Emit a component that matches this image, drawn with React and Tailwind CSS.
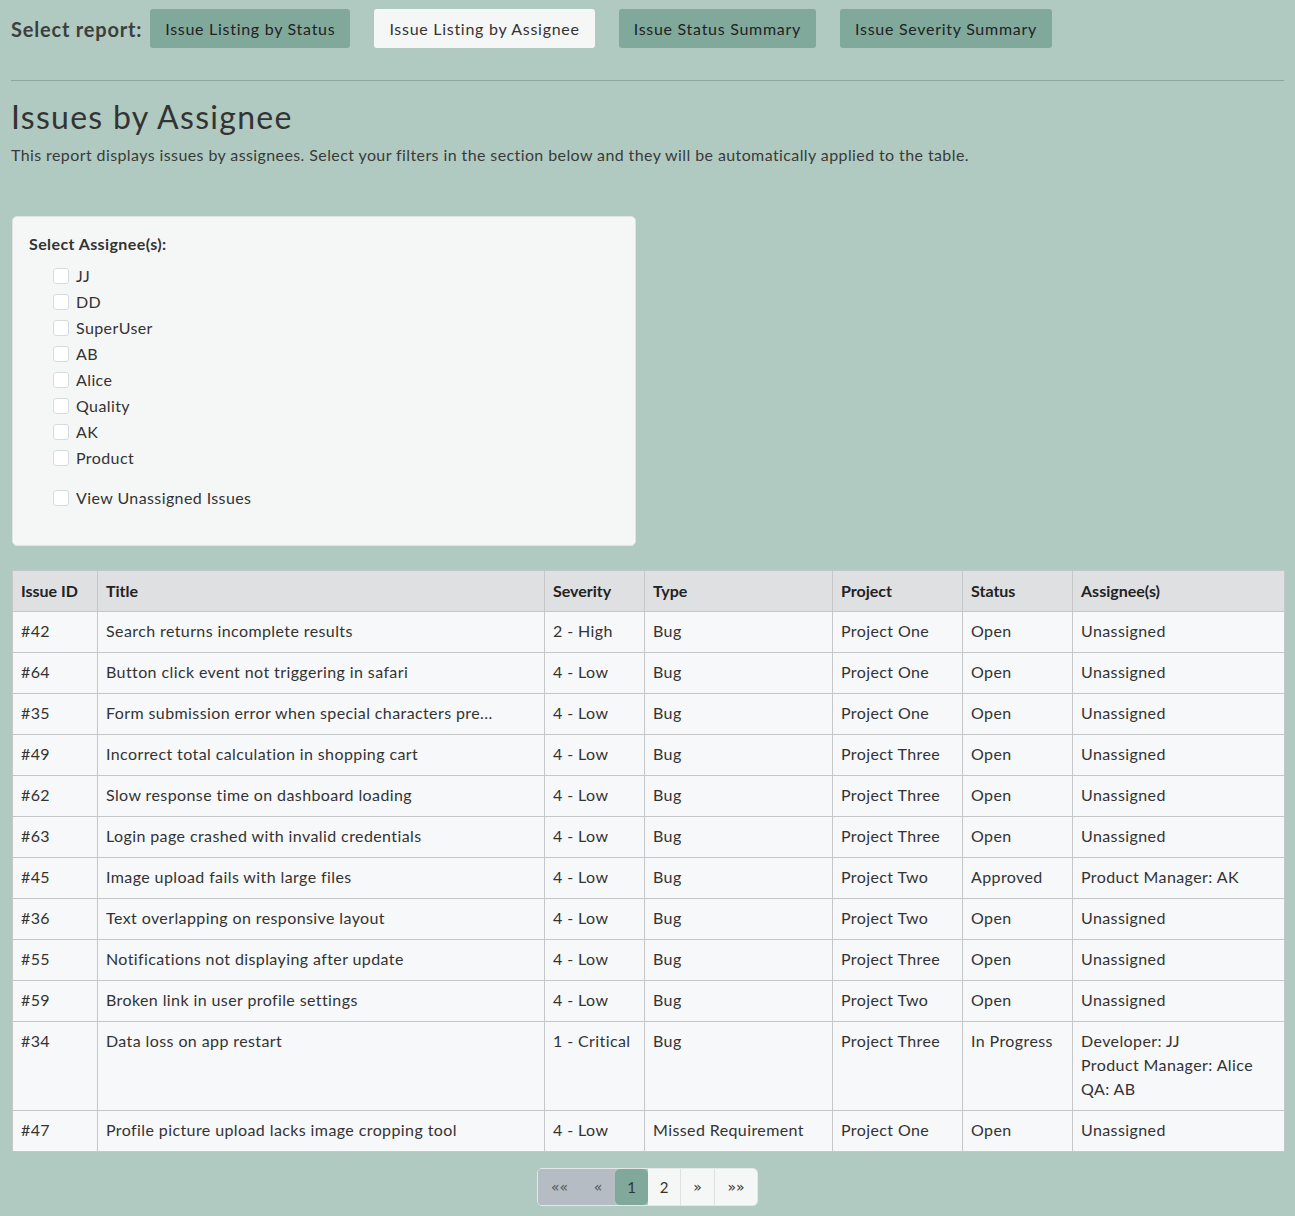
import React from 'react';

const reports = [
    { label: 'Issue Listing by Status', active: false },
    { label: 'Issue Listing by Assignee', active: true },
    { label: 'Issue Status Summary', active: false },
    { label: 'Issue Severity Summary', active: false },
];

const assignees = ['JJ', 'DD', 'SuperUser', 'AB', 'Alice', 'Quality', 'AK', 'Product'];

const issues = [
    ['#42', 'Search returns incomplete results', '2 - High', 'Bug', 'Project One', 'Open', ['Unassigned']],
    ['#64', 'Button click event not triggering in safari', '4 - Low', 'Bug', 'Project One', 'Open', ['Unassigned']],
    ['#35', 'Form submission error when special characters pre...', '4 - Low', 'Bug', 'Project One', 'Open', ['Unassigned']],
    ['#49', 'Incorrect total calculation in shopping cart', '4 - Low', 'Bug', 'Project Three', 'Open', ['Unassigned']],
    ['#62', 'Slow response time on dashboard loading', '4 - Low', 'Bug', 'Project Three', 'Open', ['Unassigned']],
    ['#63', 'Login page crashed with invalid credentials', '4 - Low', 'Bug', 'Project Three', 'Open', ['Unassigned']],
    ['#45', 'Image upload fails with large files', '4 - Low', 'Bug', 'Project Two', 'Approved', ['Product Manager: AK']],
    ['#36', 'Text overlapping on responsive layout', '4 - Low', 'Bug', 'Project Two', 'Open', ['Unassigned']],
    ['#55', 'Notifications not displaying after update', '4 - Low', 'Bug', 'Project Three', 'Open', ['Unassigned']],
    ['#59', 'Broken link in user profile settings', '4 - Low', 'Bug', 'Project Two', 'Open', ['Unassigned']],
    ['#34', 'Data loss on app restart', '1 - Critical', 'Bug', 'Project Three', 'In Progress', ['Developer: JJ', 'Product Manager: Alice', 'QA: AB']],
    ['#47', 'Profile picture upload lacks image cropping tool', '4 - Low', 'Missed Requirement', 'Project One', 'Open', ['Unassigned']],
];

const columns = [
    { label: 'Issue ID', w: 'w-[85px]' },
    { label: 'Title', w: 'w-[447px]' },
    { label: 'Severity', w: 'w-[100px]' },
    { label: 'Type', w: 'w-[188px]' },
    { label: 'Project', w: 'w-[130px]' },
    { label: 'Status', w: 'w-[110px]' },
    { label: 'Assignee(s)', w: 'w-[212px]' },
];

const Checkbox = ({ label, className = '' }) => (
    <label className={`flex items-center h-[26px] pl-[24px] ${className}`}>
        <span className="w-[16px] h-[16px] rounded-[3px] border border-[#d6dbe0] bg-white mr-[7px]" />
        <span>{label}</span>
    </label>
);

const App = () => {
    return (
        <div
            className="min-h-screen bg-[#b0cac1] px-[11px] pt-[9px] pb-[10px] text-[16px] tracking-[0.025em] text-[#333]"
            style={{ fontFamily: 'Lato, "Open Sans", sans-serif' }}
        >
            <div className="flex items-center">
                <span className="text-[20px] font-bold tracking-[0.04em] text-[#3b3f3d] mr-[8px]">Select report:</span>
                <div className="flex gap-[24px]">
                    {reports.map((r) => (
                        <button
                            key={r.label}
                            className={`h-[39px] px-[15px] rounded-[3px] text-[16px] tracking-[0.045em] ${
                                r.active ? 'bg-[#f5f7f6] text-[#333]' : 'bg-[#80a99c] text-[#222]'
                            }`}
                        >
                            {r.label}
                        </button>
                    ))}
                </div>
            </div>

            <hr className="mt-[32px] border-0 border-t border-[#8ea79e]" />

            <h1 className="mt-[16px] text-[32px] leading-[40px] tracking-[0.04em] text-[#333]">Issues by Assignee</h1>
            <p className="mt-[6px] leading-[24px] text-[#3a3a3a]">
                This report displays issues by assignees. Select your filters in the section below and they will be automatically applied to the table.
            </p>

            <div className="mt-[49px] ml-px w-[624px] h-[330px] bg-[#f5f7f6] border border-[#dfe3e1] rounded-[5px] pt-[15px] px-[16px]">
                <div className="font-bold text-[#333] mb-[7px]">Select Assignee(s):</div>
                {assignees.map((a) => (
                    <Checkbox key={a} label={a} />
                ))}
                <Checkbox label="View Unassigned Issues" className="mt-[14px]" />
            </div>

            <table className="mt-[24px] ml-px w-[1272px] table-fixed border-collapse bg-[#f7f8fa]">
                <thead>
                    <tr className="bg-[#dfe0e2]">
                        {columns.map((c) => (
                            <th
                                key={c.label}
                                className={`${c.w} border border-[#c4c6c8] px-[8px] h-[41px] text-left font-bold tracking-normal text-[#222]`}
                            >
                                {c.label}
                            </th>
                        ))}
                    </tr>
                </thead>
                <tbody>
                    {issues.map((row) => (
                        <tr key={row[0]}>
                            {row.slice(0, 6).map((cell, i) => (
                                <td
                                    key={i}
                                    className="border border-[#c4c6c8] px-[8px] pt-[7px] pb-[9px] leading-[24px] align-top whitespace-nowrap"
                                >
                                    {cell}
                                </td>
                            ))}
                            <td className="border border-[#c4c6c8] px-[8px] pt-[7px] pb-[9px] leading-[24px] align-top">
                                {row[6].map((a) => (
                                    <div key={a}>{a}</div>
                                ))}
                            </td>
                        </tr>
                    ))}
                </tbody>
            </table>

            <div className="mt-[16px] flex justify-center">
                <div className="flex h-[38px] rounded-[5px] overflow-hidden text-[#333] border border-[#e4e8e6] tracking-normal">
                    <span className="w-[43px] flex items-center justify-center bg-[#b5bcc3] text-[#555] text-[14px] font-['DejaVu_Sans']">««</span>
                    <span className="w-[34px] flex items-center justify-center bg-[#b5bcc3] text-[#555] text-[14px] font-['DejaVu_Sans']">«</span>
                    <span className="w-[33px] flex items-center justify-center bg-[#80a99c] rounded-[5px] text-[15px]">1</span>
                    <span className="w-[33px] flex items-center justify-center bg-[#f5f7f6] border-r border-[#dde1e4] text-[15px]">2</span>
                    <span className="w-[34px] flex items-center justify-center bg-[#f5f7f6] border-r border-[#dde1e4] text-[14px] font-['DejaVu_Sans']">»</span>
                    <span className="w-[42px] flex items-center justify-center bg-[#f5f7f6] text-[14px] font-['DejaVu_Sans']">»»</span>
                </div>
            </div>
        </div>
    );
};

export default App;
